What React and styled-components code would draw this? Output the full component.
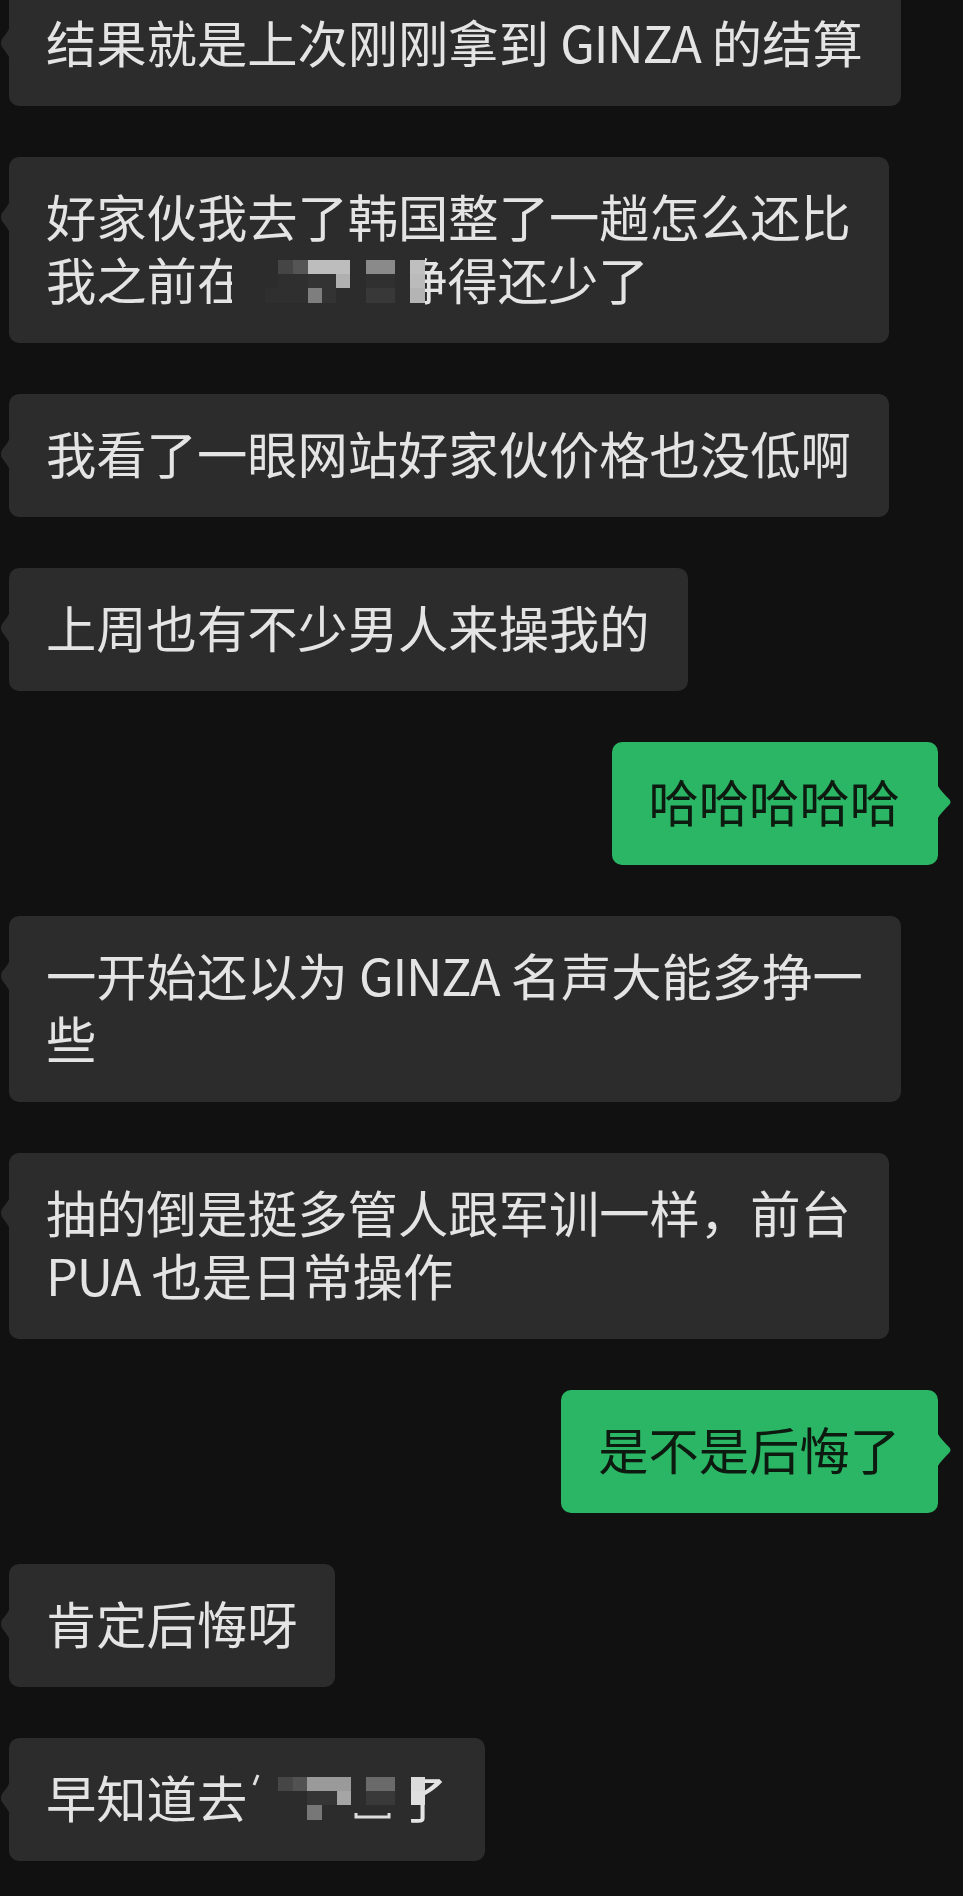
import styled, { createGlobalStyle } from "styled-components";

const GlobalStyle = createGlobalStyle`
  html, body {
    margin: 0;
    padding: 0;
    background: #111111;
  }
  body {
    font-family: "Noto Sans CJK SC", "Noto Sans", sans-serif;
  }
`;

const Screen = styled.div`
  width: 963px;
  height: 1896px;
  overflow: hidden;
  background: #111111;
`;

const MessageList = styled.div`
  display: flex;
  flex-direction: column;
  gap: 51px;
  margin-top: -17px;
  padding: 0 25px 0 9px;
`;

const Row = styled.div`
  display: flex;
  justify-content: ${(p) => (p.$mine ? "flex-end" : "flex-start")};
`;

const Bubble = styled.div`
  position: relative;
  width: fit-content;
  padding: 27px 38px 33px 37px;
  border-radius: 10px;
  background: ${(p) => (p.$mine ? "#2bb665" : "#2c2c2c")};
  color: ${(p) => (p.$mine ? "#0c1a10" : "#e4e4e4")};
  font-size: 50.3px;
  line-height: 63px;
  white-space: nowrap;
`;

const Line = styled.div`
  height: 63px;
`;

// latin words in the reference are set a little tighter than the CJK text
const Latin = styled.span`
  letter-spacing: -1.2px;
`;

const Tail = styled.svg`
  position: absolute;
  top: ${(p) => (p.$mine ? "42px" : "44px")};
  ${(p) => (p.$mine ? "right: -15px;" : "left: -9px;")}
`;

const MosaicSvg = styled.svg`
  position: relative;
  z-index: 1;
  display: inline-block;
  vertical-align: top;
  margin-right: -28px;
`;

// [x, y, w, h, colour] relative to the start of the hidden three-character slot
const MOSAICS = {
  a: {
    cover: 178,
    cells: [
      [31, 13, 15, 14, "#454545"],
      [46, 13, 15, 14, "#555555"],
      [61, 13, 42, 14, "#bdbdbd"],
      [119, 13, 29, 14, "#8a8a8a"],
      [163, 13, 15, 14, "#bfbfbf"],
      [31, 27, 30, 14, "#2f2f2f"],
      [61, 27, 28, 14, "#333333"],
      [89, 27, 14, 14, "#b0b0b0"],
      [119, 27, 29, 14, "#303030"],
      [163, 27, 15, 14, "#bbbbbb"],
      [18, 41, 43, 15, "#2f2f2f"],
      [61, 41, 14, 15, "#7e7e7e"],
      [75, 41, 14, 15, "#333333"],
      [119, 41, 29, 15, "#383838"],
      [163, 41, 15, 15, "#b4b4b4"],
    ],
  },
  b: {
    cover: 164,
    cells: [
      [31, 12, 15, 14, "#464646"],
      [46, 12, 14, 14, "#525252"],
      [60, 12, 44, 14, "#9a9a9a"],
      [119, 12, 29, 14, "#6a6a6a"],
      [164, 12, 14, 14, "#dcdcdc"],
      [60, 26, 30, 14, "#353535"],
      [90, 26, 14, 14, "#a5a5a5"],
      [119, 26, 29, 14, "#393939"],
      [164, 26, 14, 14, "#e0e0e0"],
      [60, 40, 15, 15, "#777777"],
    ],
  },
};

const Mosaic = ({ kind, before = 0 }) => {
  const { cover, cells } = MOSAICS[kind];
  const w = before + 178;
  return (
    <MosaicSvg
      width={w}
      height={63}
      viewBox={`${-before} 0 ${w} 63`}
      style={{ marginLeft: -before }}
    >
      <rect x={-before} y={0} width={before + cover} height={63} fill="#2c2c2c" />
      {cells.map(([x, y, cw, ch, c], i) => (
        <rect key={i} x={x} y={y} width={cw} height={ch} fill={c} />
      ))}
      {kind === "b" && (
        <g stroke="#dedede" strokeWidth="3" fill="none">
          <path d="M11 10 L7 20" />
          <path d="M109 48 L109 52 L142 52 L142 48" />
        </g>
      )}
    </MosaicSvg>
  );
};

const messages = [
  { lines: [["结果就是上次刚刚拿到 ", { latin: "GINZA" }, " 的结算"]] },
  {
    lines: [
      ["好家伙我去了韩国整了一趟怎么还比"],
      ["我之前在", { mosaic: "a", before: 15 }, "挣得还少了"],
    ],
  },
  { lines: [["我看了一眼网站好家伙价格也没低啊"]] },
  { lines: [["上周也有不少男人来操我的"]] },
  { mine: true, lines: [["哈哈哈哈哈"]] },
  {
    lines: [["一开始还以为 ", { latin: "GINZA" }, " 名声大能多挣一"], ["些"]],
  },
  {
    lines: [
      ["抽的倒是挺多管人跟军训一样，前台"],
      [{ latin: "PUA" }, " 也是日常操作"],
    ],
  },
  { mine: true, lines: [["是不是后悔了"]] },
  { lines: [["肯定后悔呀"]] },
  { lines: [["早知道去", { mosaic: "b" }, "了"]] },
];

const Part = ({ part }) => {
  if (typeof part === "string") return part;
  if (part.latin) return <Latin>{part.latin}</Latin>;
  return <Mosaic kind={part.mosaic} before={part.before} />;
};

const BubbleTail = ({ mine }) =>
  mine ? (
    <Tail $mine width="16" height="36" viewBox="0 0 16 36">
      <path
        d="M0 0 C2 4 4 7 12 15 Q15 18 12 21 C4 29 2 32 0 36 Z"
        fill="#2bb665"
      />
    </Tail>
  ) : (
    <Tail width="10" height="32" viewBox="0 0 10 32">
      <path
        d="M10 0 C8 4 6 7 2 12 Q0 16 2 20 C6 25 8 28 10 32 Z"
        fill="#2c2c2c"
      />
    </Tail>
  );

const App = () => (
  <Screen>
    <GlobalStyle />
    <MessageList>
      {messages.map((m, i) => (
        <Row key={i} $mine={m.mine}>
          <Bubble $mine={m.mine}>
            <BubbleTail mine={m.mine} />
            {m.lines.map((line, j) => (
              <Line key={j}>
                {line.map((part, k) => (
                  <Part key={k} part={part} />
                ))}
              </Line>
            ))}
          </Bubble>
        </Row>
      ))}
    </MessageList>
  </Screen>
);

export default App;
